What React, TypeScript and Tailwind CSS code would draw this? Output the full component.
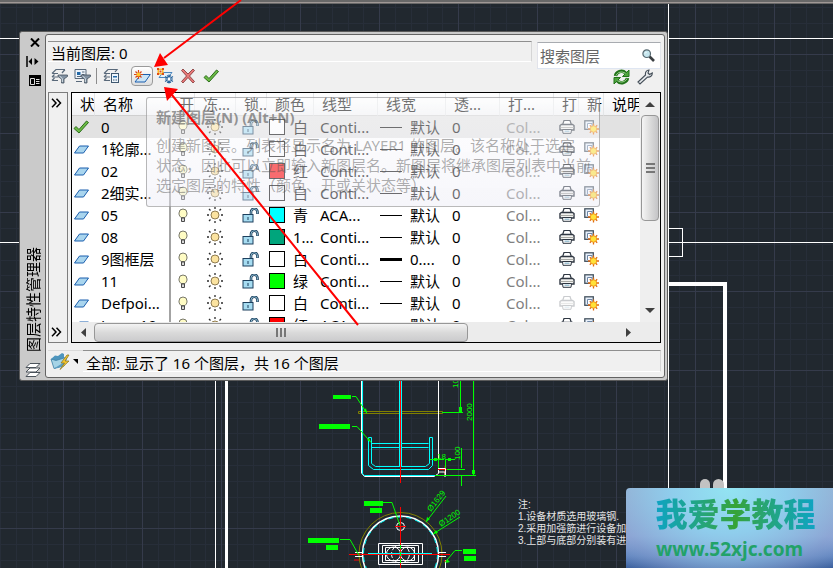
import { useState } from 'react';
import type { ReactNode } from 'react';

interface Layer {
  name: string;
  current?: boolean;
  swatch: string;
  colorName: string;
  linetype: string;
  weight: string;
  thick?: boolean;
  noPlot?: boolean;
}

const layers: Layer[] = [
  { name: '0', current: true, swatch: 'bg-white', colorName: '白', linetype: 'Conti...', weight: '默认' },
  { name: '1轮廓...', swatch: 'bg-white', colorName: '白', linetype: 'Conti...', weight: '默认' },
  { name: '02', swatch: 'bg-[#ff0000]', colorName: '红', linetype: 'Conti...', weight: '默认' },
  { name: '2细实...', swatch: 'bg-white', colorName: '白', linetype: 'Conti...', weight: '默认' },
  { name: '05', swatch: 'bg-[#00ffff]', colorName: '青', linetype: 'ACA...', weight: '默认' },
  { name: '08', swatch: 'bg-[#00a57c]', colorName: '1...', linetype: 'Conti...', weight: '默认' },
  { name: '9图框层', swatch: 'bg-white', colorName: '白', linetype: 'Conti...', weight: '0....', thick: true },
  { name: '11', swatch: 'bg-[#00ff00]', colorName: '绿', linetype: 'Conti...', weight: '默认' },
  { name: 'Defpoi...', swatch: 'bg-white', colorName: '白', linetype: 'Conti...', weight: '默认', noPlot: true },
  { name: 'Layer10', swatch: 'bg-[#ff0000]', colorName: '红', linetype: 'ACA...', weight: '默认' },
];

const columns = [
  { label: '状', width: 'w-[23px]' },
  { label: '名称', width: 'w-[76px]' },
  { label: '开', width: 'w-[24px]' },
  { label: '冻...', width: 'w-[41px]' },
  { label: '锁...', width: 'w-[31px]' },
  { label: '颜色', width: 'w-[47px]' },
  { label: '线型', width: 'w-[64px]' },
  { label: '线宽', width: 'w-[68px]' },
  { label: '透...', width: 'w-[54px]' },
  { label: '打...', width: 'w-[54px]' },
  { label: '打', width: 'w-[25px]' },
  { label: '新', width: 'w-[25px]' },
  { label: '说明', width: 'w-[36px]' },
];

const CheckIcon = () => (
  <svg width="16" height="14" viewBox="0 0 16 14">
    <path d="M1 8.5 3 6.5 6 9.5 13.5 1 15.5 2.5 6 13Z" fill="#6cbb45" stroke="#2c6e1c" />
  </svg>
);

const LayerIcon = () => (
  <svg width="17" height="9" viewBox="0 0 17 9">
    <path d="M1.500 8 6.500 1H15.500L10.500 8Z" fill="#a9d5ee" stroke="#1b5fae" />
  </svg>
);

const BulbIcon = () => (
  <svg width="10" height="15" viewBox="0 0 10 15">
    <path d="M3 9.500C1 7.500 1 6.500 1 5a4 4 0 0 1 8 0c0 1.500 0 2.500-2 4.500Z" fill="#fffcc4" stroke="#77776a" />
    <path d="M3.500 10h3v3.500h-3Z" fill="#d8d8d8" stroke="#4a4a4a" />
  </svg>
);

const SunIcon = () => (
  <svg width="16" height="16" viewBox="0 0 16 16">
    <path d="M8 0v2M8 14v2M0 8h2M14 8h2M2 2l1.500 1.500M12.500 12.500 14 14M2 14l1.500-1.500M12.500 3.500 14 2" stroke="#2c2c2c" strokeWidth="1.300" />
    <circle cx="8" cy="8" r="4" fill="#fbe3a0" stroke="#8f7c52" />
  </svg>
);

const LockIcon = () => (
  <svg width="17" height="15" viewBox="0 0 17 15">
    <path d="M9 6V4a3 3 0 0 1 6.500 0v2" fill="none" stroke="#1c3f5d" strokeWidth="2.600" />
    <path d="M9 6V4a3 3 0 0 1 6.500 0v1.500" fill="none" stroke="#a9d8ea" strokeWidth="0.800" />
    <rect x="1" y="6.500" width="10" height="7.500" fill="#a6dcf1" stroke="#1c3f5d" />
    <path d="M6 9v3" stroke="#1c3f5d" />
  </svg>
);

const PrinterIcon = ({ faded }: { faded?: boolean }) => (
  <svg width="16" height="14" viewBox="0 0 16 14" className={faded ? 'opacity-25' : ''}>
    <path d="M3.500 5 5 .5h6L12.500 5" fill="#fff" stroke="#2f3742" strokeWidth="1.200" />
    <path d="M1 5.500 2.500 4.500h11L15 5.500v4.500H1Z" fill="#f3f3f0" stroke="#2f3742" strokeWidth="1.400" />
    <path d="M1.500 7.500h13" stroke="#a9aaa5" />
    <path d="M3.500 9.500h9L12 13.300H4Z" fill="#fff" stroke="#2f3742" />
    <path d="M5.500 10.500h5v1.500h-5Z" fill="#9fc3d4" />
  </svg>
);

const ViewportIcon = () => (
  <svg width="15" height="15" viewBox="0 0 15 15">
    <rect x=".8" y=".8" width="8.500" height="8.500" fill="#e8f0fb" stroke="#44525f" strokeWidth="1.300" />
    <path d="M3.500 8V3.500H8V7" fill="#fff" stroke="#6f87a6" />
    <path d="M9.500 3.500v11M4 9h11M5.800 5.300l7.400 7.400M13.200 5.300l-7.400 7.400" stroke="#e06a10" strokeWidth="1.300" />
    <circle cx="9.500" cy="9" r="3.200" fill="#ffe23a" stroke="#f29a1c" />
  </svg>
);

const FunnelFilterIcon = ({ kind }: { kind: 'property' | 'group' }) => (
  <svg width="17" height="16" viewBox="0 0 17 16">
    {kind === 'property' ? (
      <path d="M1 5.500 5 1.500h9M1 5.500h6M1 9l2.500-2.500M1 9h6M1 12.500 3.500 10M1 12.500h6M14 1.500 11 5" fill="none" stroke="#59697a" strokeWidth="1.200" />
    ) : (
      <>
        <path d="M1 1.500h11v9H1Z" fill="#eef4fa" stroke="#59697a" />
        <path d="M3 4h3.500v3H3Z" fill="#2269a8" />
        <path d="M8 4h2.500M8 6.500h2.500M3 8.500h4M2 13.500h6" stroke="#59697a" />
      </>
    )}
    <path d="M7 7h9.500v1.500L13 11v4h-2.500v-4L7 8.500Z" fill="#8292a2" stroke="#46535f" strokeWidth=".8" />
    <path d="M8.500 8 11.300 10.500V14" fill="none" stroke="#dce5ec" />
  </svg>
);

const StatesIcon = () => (
  <svg width="17" height="16" viewBox="0 0 17 16">
    <path d="M1 5.500 5 1.500h9L12 4M1 5.500h6M1 9l2.500-2.500M1 9h6M1 12.500 3.500 10M1 12.500h6" fill="none" stroke="#59697a" strokeWidth="1.200" />
    <rect x="8.500" y="5.500" width="7" height="9" fill="#eef5fb" stroke="#3f5870" />
    <path d="M10 8h4v1.500h-4Z" fill="#2269a8" />
    <path d="M10 12h1.500M12.500 12H14" stroke="#3f5870" />
  </svg>
);

const Spark = () => (
  <>
    <path d="M4.500 0v9M0 4.500h9M1.500 1.500l6 6M7.500 1.500l-6 6" stroke="#d8451a" strokeWidth="1.200" />
    <circle cx="4.500" cy="4.500" r="2" fill="#ffc62b" />
  </>
);

const NewLayerIcon = () => (
  <svg width="17" height="13" viewBox="0 0 17 13">
    <path d="M1 12 4.500 7.500 7 4.500H16.300L11 12Z" fill="#cbe4f5" stroke="#1b5fae" />
    <Spark />
  </svg>
);

const NewFrozenIcon = () => (
  <svg width="17" height="16" viewBox="0 0 17 16">
    <path d="M2 9.500 6 4.500H15L11 9.500Z" fill="#e4f1fa" stroke="#4b86bd" />
    <path d="M0 0h2v2H0ZM5 0h2v2H5ZM0 5h2v2H0ZM5 5h2v2H5ZM2.500 2.500h2v2h-2Z" fill="#e24b16" />
    <path d="M2 .5h3v1.500H2ZM.5 2h1.500v3H.5ZM5 2h1.500v3H5ZM2 5h3v1.500H2Z" fill="#ffb928" />
    <path d="M12 6.500v9M8 8.500l8 5M16 8.500l-8 5M10 7.500l2 1.500 2-1.500M10 14.500l2-1.500 2 1.500M8 11h8" fill="none" stroke="#29649c" strokeWidth="1.100" />
    <circle cx="12" cy="11" r="1.500" fill="#fff" />
  </svg>
);

const DeleteIcon = () => (
  <svg width="16" height="16" viewBox="0 0 16 16">
    <path d="M1.500 2.500 3 1l5 5L13 1l1.500 1.500L9.500 8l5 5.500L13 15l-5-5.500L3 15l-1.500-1.500L6.500 8Z" fill="#e87878" stroke="#7d3434" strokeWidth=".8" />
  </svg>
);

const RefreshIcon = () => (
  <svg width="17" height="16" viewBox="0 0 17 16">
    <path d="M2.500 7C3 3 9 .5 12.500 4" fill="none" stroke="#23741b" strokeWidth="3.400" />
    <path d="M16 1v6.500H9.500Z" fill="#4ea53d" stroke="#23741b" />
    <path d="M14.500 9C14 13 8 15.500 4.500 12" fill="none" stroke="#23741b" strokeWidth="3.400" />
    <path d="M1 15V8.500h6.500Z" fill="#4ea53d" stroke="#23741b" />
    <path d="M3 6.500C4 3.500 9 1.500 12.500 4.500M14 9.500C13 12.500 8 14.500 4.500 11.500" fill="none" stroke="#a8dc9a" />
  </svg>
);

const WrenchIcon = () => (
  <svg width="16" height="16" viewBox="0 0 16 16">
    <path d="M1 13 8.500 6C8 3.500 9.500 1 12 1l-1 3 1.500 1.500L15.300 4C15.500 7 13 8.500 10.500 8L3 15Z" fill="#e6e9ec" stroke="#444e58" strokeWidth="1.100" />
  </svg>
);

const SearchIcon = () => (
  <svg width="13" height="13" viewBox="0 0 13 13">
    <path d="m7.500 7.500 4.500 4.500" stroke="#3b3f42" strokeWidth="2.600" />
    <circle cx="4.700" cy="4.700" r="3.800" fill="#c6e6ee" stroke="#566870" strokeWidth="1.200" />
    <path d="M3 4.500 4.500 3" stroke="#fff" />
  </svg>
);

const ChevronsIcon = () => (
  <svg width="11" height="10" viewBox="0 0 11 10">
    <path d="m1 .8 4 4.200-4 4.200M5.500.8l4 4.200-4 4.200" fill="none" stroke="#000" strokeWidth="1.500" />
  </svg>
);

const StackIcon = () => (
  <svg width="16" height="16" viewBox="0 0 16 16">
    <path d="M1 14.500 5 10.500H15L11 14.500Z" fill="#fff" stroke="#4b535b" />
    <path d="M1 10 5 6H15L11 10Z" fill="#fff" stroke="#4b535b" />
    <path d="M1 5.500 5 1.500H15L11 5.500Z" fill="#fff" stroke="#4b535b" />
  </svg>
);

const FolderIcon = () => (
  <svg width="20" height="19" viewBox="0 0 20 19">
    <path d="M1 7 5 3.500 8 4 12 1l2 1v5L5 17Z" fill="#4e95bd" />
    <path d="M1 7 4 16.500 14 14 17 5 6 8.500Z" fill="#a5d3e6" stroke="#3d80a6" strokeWidth=".8" />
    <path d="M4 16.500 14 14 16 9Z" fill="#5a9dc2" />
    <path d="m17 3-6 8h3.500L10 17.500l9-8.500h-4l4-6Z" fill="#f5c62c" stroke="#8f7b26" strokeWidth=".8" />
  </svg>
);

const ToolButton = ({ label, active, children }: { label: string; active?: boolean; children: ReactNode }) => (
  <button
    aria-label={label}
    className={
      active
        ? 'ml-2 flex h-5 w-[22px] items-center justify-center rounded-sm border border-[#9a9a9a] bg-gradient-to-b from-white to-[#dedede]'
        : 'flex h-5 w-[22px] items-center justify-center'
    }
  >
    {children}
  </button>
);

const LayerTable = () => (
  <table className="w-full table-fixed border-separate border-spacing-0 text-[15px] leading-[22px]">
    <thead>
      <tr className="h-[23px]">
        {columns.map((col, i) => (
          <th
            key={i}
            className={`${col.width} overflow-hidden border-r border-b border-r-[#e4e6e8] border-b-[#cfcfcf] bg-gradient-to-b from-white to-[#f1f2f4] p-0 pl-2 text-left font-normal whitespace-nowrap`}
          >
            {col.label}
          </th>
        ))}
      </tr>
    </thead>
    <tbody>
      {layers.map((layer) => (
        <tr
          key={layer.name}
          className={layer.current ? 'h-[22px] bg-[#e2e2e2] whitespace-nowrap' : 'h-[22px] whitespace-nowrap'}
        >
          <td className="p-0 pl-px">{layer.current ? <CheckIcon /> : <LayerIcon />}</td>
          <td className="overflow-hidden border-r-2 border-[#a3a3a3] p-0 pl-[6px]">{layer.name}</td>
          <td className="p-0"><div className="flex justify-center"><BulbIcon /></div></td>
          <td className="p-0"><div className="flex justify-center pr-[2px]"><SunIcon /></div></td>
          <td className="p-0"><div className="flex justify-center pr-[2px]"><LockIcon /></div></td>
          <td className="overflow-hidden p-0 pl-[2px]">
            <div className="flex items-center gap-2">
              <span className={`size-4 shrink-0 border border-black ${layer.swatch}`} />
              {layer.colorName}
            </div>
          </td>
          <td className="overflow-hidden p-0 pl-[6px]">{layer.linetype}</td>
          <td className="overflow-hidden p-0 pl-[2px]">
            <div className="flex items-center gap-2">
              <span className={layer.thick ? 'h-[3px] w-[22px] bg-black' : 'h-px w-[22px] bg-black'} />
              {layer.weight}
            </div>
          </td>
          <td className="p-0 pl-[6px]">0</td>
          <td className="overflow-hidden p-0 pl-[6px] text-[#808080]">Col...</td>
          <td className="p-0"><div className="flex justify-center"><PrinterIcon faded={layer.noPlot} /></div></td>
          <td className="p-0"><div className="flex justify-center"><ViewportIcon /></div></td>
          <td className="p-0" />
        </tr>
      ))}
    </tbody>
  </table>
);

const VerticalScroll = () => (
  <div className="flex w-5 shrink-0 flex-col items-center bg-[#efefef]">
    <button aria-label="向上滚动" className="flex h-[22px] w-full items-center justify-center">
      <svg width="10" height="5"><path d="M0 5 5 0l5 5Z" fill="#404040" /></svg>
    </button>
    <div className="flex h-[106px] w-[18px] flex-col items-center justify-center gap-[2px] rounded-sm border border-[#979797] bg-gradient-to-r from-[#f5f5f5] via-[#dcdcdc] to-[#c4c4c6]">
      <span className="h-[2px] w-[9px] bg-[#777]" />
      <span className="h-[2px] w-[9px] bg-[#777]" />
      <span className="h-[2px] w-[9px] bg-[#777]" />
    </div>
    <button aria-label="向下滚动" className="mt-auto flex h-6 w-full items-center justify-center">
      <svg width="10" height="5"><path d="M0 0h10L5 5Z" fill="#404040" /></svg>
    </button>
  </div>
);

const HorizontalScroll = () => (
  <div className="flex h-5 items-center bg-[#ececec] pr-5">
    <button aria-label="向左滚动" className="flex h-full w-[22px] items-center justify-center">
      <svg width="5" height="9"><path d="M5 0v9L0 4.500Z" fill="#404040" /></svg>
    </button>
    <div className="flex h-[19px] w-[374px] items-center justify-center gap-[2px] rounded-sm border border-[#979797] bg-gradient-to-b from-[#f3f3f3] via-[#dadada] to-[#cbcbcd]">
      <span className="h-[9px] w-[2px] bg-[#777]" />
      <span className="h-[9px] w-[2px] bg-[#777]" />
      <span className="h-[9px] w-[2px] bg-[#777]" />
    </div>
    <button aria-label="向右滚动" className="ml-auto flex h-full w-6 items-center justify-center">
      <svg width="5" height="9"><path d="M0 0v9l5-4.500Z" fill="#404040" /></svg>
    </button>
  </div>
);

const Tooltip = () => (
  <div
    role="tooltip"
    className="absolute top-[65px] left-[126px] h-[110px] w-[454px] rounded-[3px] border border-[#76767680] bg-gradient-to-b from-[#ffffff70] to-[#ebebf573] px-[9px] pt-[9px] text-[15px] leading-5 whitespace-nowrap text-[#4c4c4c73]"
  >
    <p className="mb-2 font-bold text-[#4c4c4c90]">新建图层(N) (Alt+N)</p>
    <p>
      创建新图层。列表将显示名为 LAYER1 的图层。该名称处于选定
      <br />
      状态，因此可以立即输入新图层名。新图层将继承图层列表中当前
      <br />
      选定图层的特性（颜色、开或关状态等）
    </p>
  </div>
);

const Drawing = () => (
  <svg className="absolute inset-0 h-full w-full" fill="none">
    <defs>
      <pattern id="grid" x="63" y="54" width="79" height="79" patternUnits="userSpaceOnUse">
        <path d="M16.500 0v79M32.500 0v79M48.500 0v79M63.500 0v79M0 16.500h79M0 32.500h79M0 48.500h79M0 63.500h79" stroke="#272e39" />
        <path d="M.5 0v79M0 .5h79" stroke="#353b4b" />
      </pattern>
    </defs>
    <rect width="100%" height="100%" fill="url(#grid)" />
    <rect width="100%" height="4" fill="#686868" />
    <path d="M0 2.500h2000" stroke="#a09896" />

    {/* drawing frame and crosshair */}
    <g stroke="#fff">
      <path d="M0 38.500h2000M0 242.500h2000M668.500 4v564M215.500 381v187" />
      <rect x="640.500" y="228.500" width="42" height="28" />
      <path d="M668 284h57v284" strokeWidth="4" />
      <path d="M226.500 381v187" strokeWidth="3" />
    </g>

    {/* side view of the tank */}
    <path d="M358.500 411.500h84v2h-84Z" stroke="#808000" />
    <path d="M361.500 381v92l3 3.500H434l4.500-3V381" stroke="#fff" />
    <path d="M362.500 381v93l2 1.500H436M399.500 381v85M401.500 381v85" stroke="#00ffff" />
    <path d="M368.500 437.500h3v26l4 3h50l4-3v-26h3v28l-4 4h-55l-5-4ZM371.500 443.500h57M371.500 447.500h57" stroke="#00ffff" />
    <path d="M400.500 381v102M438 469.500h9M445 466v10" stroke="#ff0000" />
    <path d="M438 468.500h7.500v7M438 472h7v5" stroke="#fff" />

    {/* front view */}
    <circle cx="400.500" cy="554" r="41.500" stroke="#808000" />
    <circle cx="400.500" cy="554" r="38" stroke="#fff" strokeWidth="1.500" />
    <circle cx="400.500" cy="554" r="37" stroke="#00ffff" strokeDasharray="5 4" />
    <g stroke="#fff">
      <path d="M378.500 543.500h44v21h-44ZM382.500 545.500h36v17h-36ZM385.500 547.500h29v13h-29Z" />
      <circle cx="400.500" cy="554" r="9" strokeDasharray="6 2" />
      <circle cx="393.500" cy="554" r="7" />
      <circle cx="407.500" cy="554" r="7" />
      <circle cx="400.500" cy="526.500" r="4" />
      <path d="M355 552.500h8M355 556.500h8M438 552.500h8M438 556.500h8M445.500 560v8" />
    </g>
    <path d="M368 553.500h64" stroke="#00ffff" />
    <path d="M349 554.500h101M400.500 507v61M395 526.500h11M354 560h5M444 561h3" stroke="#ff0000" />
    <path d="M400.500 545v19" stroke="#00ff00" strokeDasharray="4 3" />

    {/* leaders and dimensions */}
    <g stroke="#00ff00">
      <path d="M352 396.500h4l11 17M352 426.500h5l14 16M383 502.500h9l8 23M340 539.500h10l9 16M462 550.500h-7l-10 12" />
      <path d="M442 412.500h21M460.500 381v31M473.500 381v94M435 475.500h41M447 469.500h18M461.500 448v20M461.500 476v10M430 459.500h14M446 459.500h9M438.500 459v9M445.500 459v9" />
      <path d="m446 496-20 26M460 517l-27 17" />
    </g>
    <g fill="#00ff00">
      <path d="M333 395h18v4h-18ZM319 424h31v5h-31ZM364 501h19v5h-19ZM370 508h12v5h-12ZM308 538h31v5h-31ZM326 545h12v5h-12ZM463 549h13v5h-13ZM464 556h12v5h-12Z" />
      <path d="m426 522 1-5 3 2ZM433 534l3-4 2 3ZM472 470h3v4h-3ZM459 407h3v5h-3ZM448 458h3v3h-3ZM434 458h3v3h-3ZM366 408l1 5-3-2ZM371 442l-4-2 2-2ZM446 563l1-4 3 3Z" />
      <g fontFamily="Liberation Sans" fontSize="8">
        <text transform="translate(472 421) rotate(-90)">2000</text>
        <text transform="translate(458 388) rotate(-90)">10</text>
        <text transform="translate(460 460) rotate(-90)">100</text>
        <text x="437" y="459">18</text>
        <text transform="translate(431 512) rotate(-52)">Ø1629</text>
        <text transform="translate(441 527) rotate(-34)">Ø1200</text>
      </g>
    </g>
  </svg>
);

const Arrows = () => (
  <svg className="pointer-events-none absolute inset-0 h-full w-full">
    <path d="M241 0 164 58M172 95 358 325" stroke="#f00" strokeWidth="2" />
    <path d="M154 67 160 53 168 65ZM164 87 178 89 167 101Z" fill="#f00" />
  </svg>
);

const Watermark = () => (
  <div className="absolute right-0 bottom-0 w-[207px]">
    <div className="absolute -top-[9px] left-[74px] flex gap-[3px]">
      <span className="h-5 w-[10px] rounded-full bg-[#c2c2c2]" />
      <span className="h-5 w-[11px] rounded-full bg-[#c2c2c2]" />
    </div>
    <div className="relative flex h-20 flex-col items-center rounded-tl-sm bg-[radial-gradient(ellipse_at_50%_0%,#93e4f2_0%,#8fcdec_40%,#8ba6d680_80%,transparent_100%),linear-gradient(to_bottom,#9fb9cf_0%,#8fa6d4_60%,#5e83bd_85%,#3a5f9c_100%)] pt-2 pl-3">
      <p className="bg-gradient-to-r from-[#0fa3c4] via-[#36a336] to-[#0fa3c4] bg-clip-text text-[32px] leading-9 font-black text-transparent">
        我爱学教程
      </p>
      <p className="pr-3 text-[19px] leading-[34px] font-bold text-[#22a268]">www.52xjc.com</p>
    </div>
  </div>
);

export default function App() {
  const [search, setSearch] = useState('');

  return (
    <main className="relative min-h-screen overflow-hidden bg-[#21282f] pt-[31px] pl-[19px] font-['Noto_Sans','Noto_Sans_CJK_SC',sans-serif] text-black">
      <Drawing />

      <div className="absolute top-[499px] left-[518px] font-['Liberation_Sans','Noto_Sans_CJK_SC',sans-serif] text-[10px] leading-3 whitespace-nowrap text-[#e4e4e4]">
        <p>注:</p>
        <p>1.设备材质选用玻璃钢.</p>
        <p>2.采用加强筋进行设备加</p>
        <p>3.上部与底部分别装有进</p>
      </div>

      <section className="relative flex w-[649px] rounded-[3px] border border-[#5a5a5a] bg-[#cacaca] py-[2px] pr-[2px]">
        <div className="flex w-[25px] shrink-0 flex-col items-center pt-[2px]">
          <button aria-label="关闭" className="ml-1 flex h-3 items-center">
            <svg width="10" height="9"><path d="m1 .5 8 8M9 .5l-8 8" stroke="#000" strokeWidth="2" /></svg>
          </button>
          <button aria-label="自动隐藏" className="mt-[7px] flex h-3 items-center">
            <svg width="13" height="11"><path d="M1 0v11" stroke="#000" strokeWidth="1.500" /><path d="M2.500 5.500 6 2v7ZM12.500 5.500 8.500 2v7Z" /></svg>
          </button>
          <button aria-label="特性" className="mt-[7px] ml-1 flex h-3 items-center">
            <svg width="12" height="11"><path d="M0 0h12v11H0Z" /><path d="M1.500 3.500h4v6h-4ZM7 4.500h3.500M7 6.500h3.500M7 8.500h3.500" stroke="#ddd" fill="none" /></svg>
          </button>
          <h1 className="mt-auto rotate-180 text-[15px] leading-5 [text-orientation:sideways] [writing-mode:vertical-rl]">图层特性管理器</h1>
          <div className="mt-[10px]"><StackIcon /></div>
        </div>

        <div className="min-w-0 flex-1 rounded-[3px] border border-[#636363] bg-[#f0f0f0] pr-[3px] pb-[5px] pl-[2px]">
          <div className="flex h-[57px] gap-[5px]">
            <div className="flex-1 pt-[6px]">
              <p className="h-[21px] border-t border-r border-b border-t-[#8f8f8f] border-r-[#d5d5d5] border-b-white pl-[3px] text-[15px] leading-[22px]">
                当前图层: 0
              </p>
              <div className="flex h-7 items-center gap-px">
                <ToolButton label="新建特性过滤器"><FunnelFilterIcon kind="property" /></ToolButton>
                <ToolButton label="新建组过滤器"><FunnelFilterIcon kind="group" /></ToolButton>
                <span className="mx-[2px] h-4 w-px bg-[#8c8c8c]" />
                <ToolButton label="图层状态管理器"><StatesIcon /></ToolButton>
                <ToolButton label="新建图层" active><NewLayerIcon /></ToolButton>
                <ToolButton label="在所有视口中都被冻结的新图层视口"><NewFrozenIcon /></ToolButton>
                <ToolButton label="删除图层"><DeleteIcon /></ToolButton>
                <ToolButton label="置为当前"><CheckIcon /></ToolButton>
              </div>
            </div>
            <div className="w-[124px] pt-[7px]">
              <label className="flex h-[27px] items-center border border-t-[#a8abb0] border-r-[#e2e5ea] border-b-[#dfe6f2] border-l-[#e2e3ea] bg-white pr-[5px] pl-[2px]">
                <input
                  type="text"
                  aria-label="搜索图层"
                  value={search}
                  onChange={(e) => setSearch(e.target.value)}
                  placeholder="搜索图层"
                  className="min-w-0 flex-1 text-[15px] leading-5 outline-none placeholder:text-[#666]"
                />
                <SearchIcon />
              </label>
              <div className="flex justify-end gap-[7px] pr-2">
                <button aria-label="刷新"><RefreshIcon /></button>
                <button aria-label="设置"><WrenchIcon /></button>
              </div>
            </div>
          </div>

          <div className="flex h-[251px] gap-[3px]">
            <div className="flex w-5 shrink-0 flex-col items-center justify-between border border-[#7d7d7d] py-[5px] pr-[3px]">
              <button aria-label="展开过滤器树"><ChevronsIcon /></button>
              <button aria-label="折叠过滤器树"><ChevronsIcon /></button>
            </div>
            <div className="flex min-w-0 flex-1 flex-col border border-black bg-white">
              <div className="flex h-[229px]">
                <div className="min-w-0 flex-1 overflow-hidden">
                  <LayerTable />
                </div>
                <VerticalScroll />
              </div>
              <HorizontalScroll />
            </div>
          </div>

          <div className="flex h-[29px] items-stretch pt-[7px]">
            <button aria-label="反向过滤器" className="flex w-[35px] items-center gap-[3px] border-t border-[#dadada] pl-[2px]">
              <FolderIcon />
              <svg width="5" height="5"><path d="M0 0h5v5Z" /></svg>
            </button>
            <p className="flex-1 border-t border-r border-b border-t-[#8f8f8f] border-r-[#d5d5d5] border-b-white pl-[3px] text-[15px] leading-6">
              全部: 显示了 16 个图层，共 16 个图层
            </p>
          </div>
        </div>

        <Tooltip />
      </section>

      <Arrows />
      <Watermark />
    </main>
  );
}
